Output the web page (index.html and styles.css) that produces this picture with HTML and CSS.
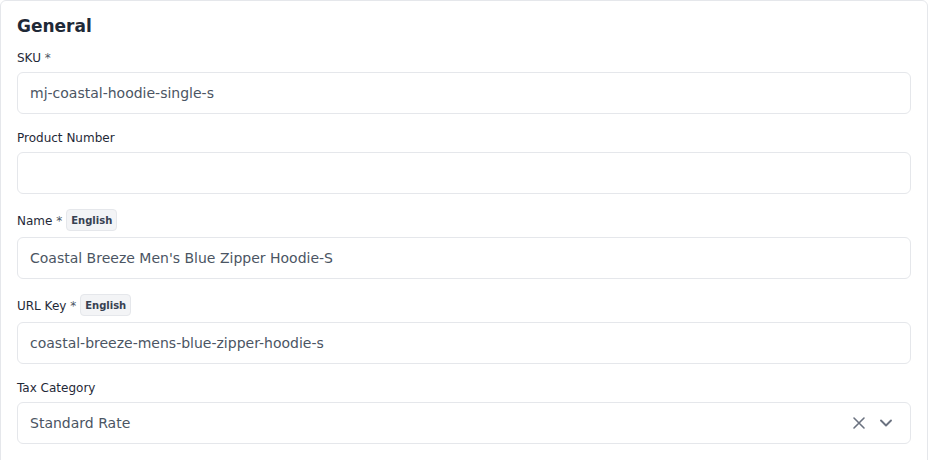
FILE: index.html
```html
<!DOCTYPE html>
<html lang="en">
<head>
<meta charset="utf-8">
<title>General</title>
<link rel="stylesheet" href="styles.css">
</head>
<body>
<section class="card">
  <h2 class="card-title">General</h2>

  <div class="field">
    <div class="label-row"><label class="label">SKU <span class="req">*</span></label></div>
    <div class="input">mj-coastal-hoodie-single-s</div>
  </div>

  <div class="field">
    <div class="label-row"><label class="label">Product Number</label></div>
    <div class="input"></div>
  </div>

  <div class="field">
    <div class="label-row"><label class="label">Name <span class="req">*</span></label><span class="badge">English</span></div>
    <div class="input">Coastal Breeze Men's Blue Zipper Hoodie-S</div>
  </div>

  <div class="field">
    <div class="label-row"><label class="label">URL Key <span class="req">*</span></label><span class="badge">English</span></div>
    <div class="input">coastal-breeze-mens-blue-zipper-hoodie-s</div>
  </div>

  <div class="field">
    <div class="label-row"><label class="label">Tax Category</label></div>
    <div class="input select">
      <span class="value">Standard Rate</span>
      <span class="icons">
        <svg class="icon" width="16" height="16" viewBox="0 0 16 16" fill="none" stroke="currentColor" stroke-width="1.6" stroke-linecap="round"><path d="M3 3l10 10M13 3L3 13"/></svg>
        <svg class="icon" width="16" height="16" viewBox="0 0 16 16" fill="none" stroke="currentColor" stroke-width="1.9" stroke-linecap="round" stroke-linejoin="round"><path d="M3 5.5l5 5 5-5"/></svg>
      </span>
    </div>
  </div>
</section>
</body>
</html>
```

FILE: styles.css
```css
* { box-sizing: border-box; }
html, body { margin: 0; padding: 0; background: #ffffff; }
body {
  font-family: "DejaVu Sans", "Liberation Sans", sans-serif;
  color: #1f2937;
  width: 928px;
  height: 460px;
  overflow: hidden;
}
.card {
  border: 1px solid #e5e7eb;
  border-radius: 6px;
  padding: 13px 16px 16px;
  background: #fff;
  height: 520px;
}
.card-title {
  margin: 0 0 10px;
  font-size: 17px;
  line-height: 24px;
  font-weight: 700;
  color: #1f2937;
}
.field { margin-bottom: 14px; }
.label-row {
  display: flex;
  align-items: center;
  gap: 4px;
  min-height: 18px;
  margin-bottom: 6px;
}
.label {
  font-size: 12px;
  line-height: 18px;
  color: #1f2937;
  position: relative;
  top: 1px;
}
.req { color: #4b5563; }
.badge {
  display: inline-flex;
  align-items: center;
  height: 22px;
  padding: 0 4px;
  margin: 1px 0 0;
  background: #f3f4f6;
  border: 1px solid #e5e7eb;
  border-radius: 4px;
  font-size: 10px;
  font-weight: 700;
  color: #374151;
}
.input {
  height: 42px;
  border: 1px solid #e5e7eb;
  border-radius: 6px;
  padding: 0 12px;
  display: flex;
  align-items: center;
  font-size: 14px;
  color: #4b5563;
  background: #fff;
}
.select { justify-content: space-between; padding-right: 16px; }
.icons { display: flex; align-items: center; gap: 11px; color: #6b7280; }
.icon { display: block; }
```
